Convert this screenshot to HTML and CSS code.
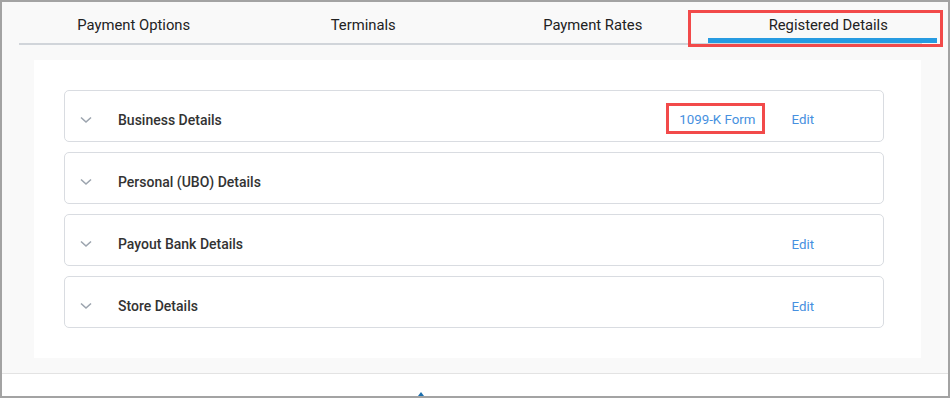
FILE: index.html
```html
<!DOCTYPE html>
<html lang="en">
  <head>
    <meta charset="UTF-8" />
    <meta name="viewport" content="width=device-width, initial-scale=1.0" />
    <title>Registered Details</title>
    <link rel="stylesheet" href="styles.css">
  </head>
  <body>
    <div class="frame">
      <div class="top">
        <nav class="tabs">
          <a class="tab">Payment Options</a>
          <a class="tab">Terminals</a>
          <a class="tab">Payment Rates</a>
          <a class="tab active">Registered Details</a>
        </nav>

        <section class="panel">
          <div class="card">
            <svg class="chevron" width="12" height="8" viewBox="0 0 12 8"><path d="M1 1.5 L6 6 L11 1.5" /></svg>
            <span class="card-title">Business Details</span>
            <div class="actions">
              <a class="link marked">1099-K Form</a>
              <a class="link">Edit</a>
            </div>
          </div>
          <div class="card">
            <svg class="chevron" width="12" height="8" viewBox="0 0 12 8"><path d="M1 1.5 L6 6 L11 1.5" /></svg>
            <span class="card-title">Personal (UBO) Details</span>
          </div>
          <div class="card">
            <svg class="chevron" width="12" height="8" viewBox="0 0 12 8"><path d="M1 1.5 L6 6 L11 1.5" /></svg>
            <span class="card-title">Payout Bank Details</span>
            <div class="actions">
              <a class="link">Edit</a>
            </div>
          </div>
          <div class="card">
            <svg class="chevron" width="12" height="8" viewBox="0 0 12 8"><path d="M1 1.5 L6 6 L11 1.5" /></svg>
            <span class="card-title">Store Details</span>
            <div class="actions">
              <a class="link">Edit</a>
            </div>
          </div>
        </section>
      </div>

      <div class="footer">
        <span class="caret"></span>
      </div>
    </div>
  </body>
</html>
```

FILE: styles.css
```css
* {
  margin: 0;
  padding: 0;
  box-sizing: border-box;
}

body {
  background: #ffffff;
  font-family: Roboto, "Liberation Sans", sans-serif;
  overflow: hidden;
}

/* screenshot frame */
.frame {
  width: 950px;
  height: 398px;
  border: 2px solid #a3a3a3;
  display: flex;
  flex-direction: column;
  overflow: hidden;
}

.top {
  height: 372px;
  background: #f9f9f9;
  border-bottom: 1px solid #e3e3e3;
}

/* tabs */
.tabs {
  position: relative;
  display: grid;
  grid-template-columns: repeat(4, 1fr);
  width: 918px;
  height: 43px;
  margin-left: 17px;
}

.tabs::before {
  content: "";
  position: absolute;
  left: 0;
  bottom: 0;
  width: 903px;
  height: 2px;
  background: #d1d5da;
}

.tab {
  position: relative;
  text-align: center;
  padding-top: 14px;
  font-size: 14.8px;
  color: #222;
  cursor: pointer;
}

.tab.active {
  padding-left: 12px;
}

.tab.active::after {
  content: "";
  position: absolute;
  left: 0;
  right: 0;
  bottom: 2px;
  height: 5px;
  background: #279be1;
}

/* red annotation box */
.tab.active::before {
  content: "";
  position: absolute;
  left: -20px;
  right: -6px;
  top: 8px;
  bottom: -2px;
  border: 3px solid #f24a4a;
}

/* white panel */
.panel {
  width: 887px;
  height: 298px;
  margin: 15px 0 0 32px;
  padding: 30px 37px 30px 30px;
  background: #ffffff;
  display: flex;
  flex-direction: column;
  gap: 10.5px;
}

.card {
  display: flex;
  align-items: center;
  height: 52px;
  padding: 8px 69px 0 15px;
  border: 1px solid #d9dce1;
  border-radius: 5px;
  background: #ffffff;
}

.chevron {
  width: 12px;
  height: 8px;
  margin-right: 26px;
}

.chevron path {
  fill: none;
  stroke: #9ca4ae;
  stroke-width: 1.6;
}

.card-title {
  font-size: 14px;
  font-weight: 500;
  color: #333;
}

.actions {
  margin-left: auto;
  display: flex;
  gap: 36px;
}

.link {
  font-size: 13.3px;
  color: #4690e0;
  cursor: pointer;
}

.link.marked {
  position: relative;
}

.link.marked::before {
  content: "";
  position: absolute;
  left: -13px;
  right: -10px;
  top: -9px;
  bottom: -7px;
  border: 3px solid #f24a4a;
}

/* bottom strip */
.footer {
  flex: 1;
  display: flex;
  align-items: flex-end;
  padding-left: 416px;
}

.caret {
  width: 0;
  height: 0;
  border-left: 3px solid transparent;
  border-right: 3px solid transparent;
  border-bottom: 4px solid #1c6fae;
}
```
